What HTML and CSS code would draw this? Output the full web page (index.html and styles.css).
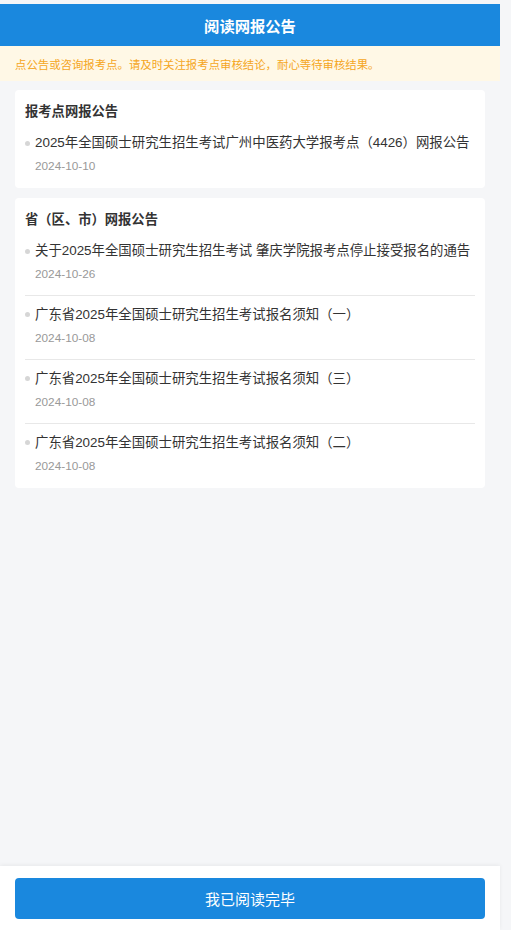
FILE: index.html
```html
<!DOCTYPE html>
<html lang="zh-CN">
<head>
<meta charset="utf-8">
<title>阅读网报公告</title>
<link rel="stylesheet" href="styles.css">
</head>
<body>
<div class="page">
  <header class="header">阅读网报公告</header>
  <div class="notice"><span class="notice-text">点公告或咨询报考点。请及时关注报考点审核结论，耐心等待审核结果。</span></div>
  <main class="main">
    <section class="card">
      <h2 class="card-title">报考点网报公告</h2>
      <ul class="list">
        <li class="item">
          <div class="item-title">2025年全国硕士研究生招生考试广州中医药大学报考点（4426）网报公告</div>
          <div class="item-date">2024-10-10</div>
        </li>
      </ul>
    </section>
    <section class="card">
      <h2 class="card-title">省（区、市）网报公告</h2>
      <ul class="list">
        <li class="item">
          <div class="item-title">关于2025年全国硕士研究生招生考试 肇庆学院报考点停止接受报名的通告</div>
          <div class="item-date">2024-10-26</div>
        </li>
        <li class="item">
          <div class="item-title">广东省2025年全国硕士研究生招生考试报名须知（一）</div>
          <div class="item-date">2024-10-08</div>
        </li>
        <li class="item">
          <div class="item-title">广东省2025年全国硕士研究生招生考试报名须知（三）</div>
          <div class="item-date">2024-10-08</div>
        </li>
        <li class="item">
          <div class="item-title">广东省2025年全国硕士研究生招生考试报名须知（二）</div>
          <div class="item-date">2024-10-08</div>
        </li>
      </ul>
    </section>
  </main>
  <footer class="footer">
    <button class="btn" type="button">我已阅读完毕</button>
  </footer>
</div>
</body>
</html>
```

FILE: styles.css
```css
* { box-sizing: border-box; }
html, body {
  margin: 0;
  padding: 0;
  background: #f5f6f8;
}
body {
  font-family: "Liberation Sans", Arial, "Noto Sans CJK SC", sans-serif;
  color: #333;
}
.page {
  width: 500px;
  min-height: 930px;
  padding-top: 4px;
  display: flex;
  flex-direction: column;
}
.header {
  height: 42px;
  background: #1a88de;
  color: #fff;
  font-size: 15.3px;
  font-weight: bold;
  display: flex;
  align-items: center;
  justify-content: center;
}
.notice {
  height: 35px;
  background: #fff8e6;
  display: flex;
  align-items: center;
  padding-left: 15px;
  overflow: hidden;
  white-space: nowrap;
}
.notice-text {
  font-size: 11.4px;
  color: #f5a623;
}
.main {
  flex: 1;
  padding: 9px 15px 0;
  display: flex;
  flex-direction: column;
  gap: 10px;
}
.card {
  background: #fff;
  border-radius: 4px;
  padding: 12px 10px 1px;
}
.card-title {
  margin: 0 0 2px;
  font-size: 13.3px;
  font-weight: bold;
  line-height: 20px;
  color: #333;
}
.list {
  list-style: none;
  margin: 0;
  padding: 0;
}
.item {
  padding: 9px 0 12px 10px;
  position: relative;
}
.item + .item {
  border-top: 1px solid #e8e8e8;
}
.item::before {
  content: "";
  position: absolute;
  left: 0;
  top: 17px;
  width: 5px;
  height: 5px;
  border-radius: 50%;
  background: #d6d6d6;
}
.item + .item::before {
  top: 16px;
}
.item-title {
  font-size: 13.4px;
  line-height: 20px;
  color: #333;
  white-space: nowrap;
}
.item-date {
  margin-top: 4px;
  font-size: 11.8px;
  line-height: 18px;
  color: #999;
}
.footer {
  background: #fff;
  padding: 12px 15px 11px;
  box-shadow: 0 -1px 4px rgba(0, 0, 0, 0.06);
}
.btn {
  display: block;
  width: 100%;
  height: 41px;
  border: 0;
  border-radius: 4px;
  background: #1a88de;
  color: #fff;
  font-family: inherit;
  font-size: 15px;
  cursor: pointer;
}
```
